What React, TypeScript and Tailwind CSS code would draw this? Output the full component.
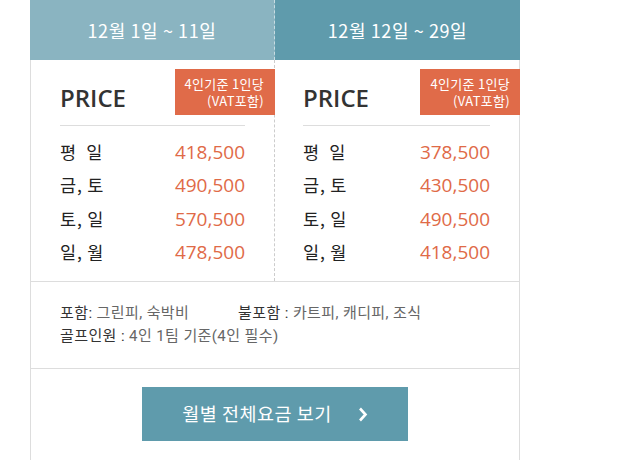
import React from "react";

type Period = {
  title: string;
  headerBg: string;
  rows: { label: string; price: string }[];
};

const periods: Period[] = [
  {
    title: "12월 1일 ~ 11일",
    headerBg: "bg-[#8ab4c1]",
    rows: [
      { label: "평\u00a0\u00a0일", price: "418,500" },
      { label: "금, 토", price: "490,500" },
      { label: "토, 일", price: "570,500" },
      { label: "일, 월", price: "478,500" },
    ],
  },
  {
    title: "12월 12일 ~ 29일",
    headerBg: "bg-[#5f9bac]",
    rows: [
      { label: "평\u00a0\u00a0일", price: "378,500" },
      { label: "금, 토", price: "430,500" },
      { label: "토, 일", price: "490,500" },
      { label: "일, 월", price: "418,500" },
    ],
  },
];

const kr = "font-['Noto_Sans_CJK_KR','Noto_Sans',sans-serif]";

function PriceColumn({ period, left }: { period: Period; left: boolean }) {
  return (
    <div className="flex w-[244px] flex-col">
      <div
        className={`flex h-[60px] items-center justify-center text-[18px] tracking-[0.6px] text-white ${period.headerBg} ${
          left ? "-ml-px w-[245px] border-r border-dashed border-[#c9dde3]" : "-mr-px w-[245px]"
        }`}
      >
        {period.title}
      </div>
      <div
        className={`flex flex-1 flex-col pb-[12px] ${
          left ? "border-r border-dashed border-[#cccccc] pl-[29px] pr-[29px]" : "pl-[28px] pr-[29px]"
        }`}
      >
        <div className="flex h-[66px] items-start justify-between border-b border-[#dddddd] pt-[9px]">
          <span className="mt-[14px] font-['Open_Sans',sans-serif] text-[24px] font-semibold leading-[30px] text-[#333333]">
            PRICE
          </span>
          <p
            className={`-mr-[30px] flex h-[46px] w-[100px] items-center justify-end bg-[#e06b49] text-right text-[13px] leading-[17px] tracking-[0.3px] text-white ${
              left ? "pr-[11px]" : "pr-[10px]"
            }`}
          >
            4인기준 1인당
            <br />
            (VAT포함)
          </p>
        </div>
        <div className="flex flex-col pt-[9px]">
          {period.rows.map((r) => (
            <div key={r.label} className="flex h-[33.5px] items-center justify-between">
              <span className="text-[17.5px] tracking-[0.8px] text-[#222222]">{r.label}</span>
              <span className="font-['Open_Sans',sans-serif] text-[19px] text-[#e06a47]">
                {r.price}
              </span>
            </div>
          ))}
        </div>
      </div>
    </div>
  );
}

export default function App() {
  return (
    <div className={`min-h-[460px] bg-white ${kr}`}>
      <div className="ml-[30px] w-[490px] border-x border-b border-[#dddddd]">
        <div className="flex">
          {periods.map((p, i) => (
            <PriceColumn key={p.title} period={p} left={i === 0} />
          ))}
        </div>

        <div className="border-t border-[#dddddd] pl-[29px] pb-[20px] pt-[20px] font-['Roboto','Noto_Sans_CJK_KR',sans-serif] text-[15px] leading-[23px] tracking-[0.4px] text-[#666666]">
          <div className="flex">
            <span className="w-[178px]">
              <span className="text-[#333333]">포함:</span> 그린피, 숙박비
            </span>
            <span>
              <span className="text-[#333333]">불포함 :</span> 카트피, 캐디피, 조식
            </span>
          </div>
          <div>
            <span className="text-[#333333]">골프인원 :</span> 4인 1팀 기준(4인 필수)
          </div>
        </div>

        <div className="flex justify-center border-t border-[#dddddd] pb-[19px] pt-[18px]">
          <button className="flex h-[54px] w-[266px] items-center justify-center gap-[26px] bg-[#5f9bac] text-[18.5px] tracking-[0.5px] text-white">
            <span>월별 전체요금 보기</span>
            <svg width="10" height="15" viewBox="0 0 10 15" fill="none">
              <path d="M2 1.5 L7.5 7.5 L2 13.5" stroke="white" strokeWidth="2.6" />
            </svg>
          </button>
        </div>
      </div>
    </div>
  );
}
